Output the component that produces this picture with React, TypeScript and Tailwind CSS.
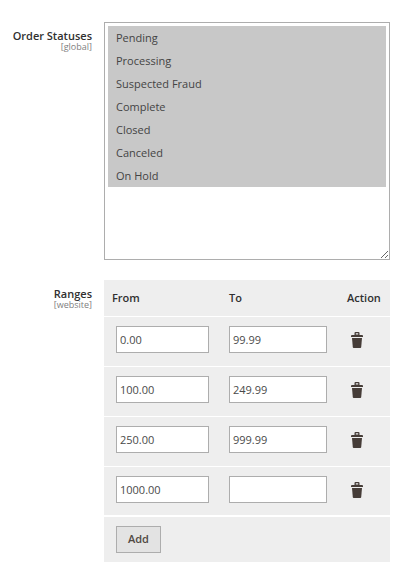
import { useState } from "react";

type Range = {
  id: number;
  from: string;
  to: string;
};

const STATUSES = [
  "Pending",
  "Processing",
  "Suspected Fraud",
  "Complete",
  "Closed",
  "Canceled",
  "On Hold",
];

const INITIAL_RANGES: Range[] = [
  { id: 1, from: "0.00", to: "99.99" },
  { id: 2, from: "100.00", to: "249.99" },
  { id: 3, from: "250.00", to: "999.99" },
  { id: 4, from: "1000.00", to: "" },
];

const inputClass =
  "block h-[27px] w-full border border-[#adadad] bg-white px-[3px] text-[11px] text-[#4a4a4a]";

function TrashIcon() {
  return (
    <svg
      viewBox="0 0 12 16"
      className="block h-4 w-3"
      fill="#463d38"
      aria-hidden="true"
    >
      <path d="M3.500 3V1Q3.500 0 4.500 0H7.500Q8.500 0 8.500 1V3H11Q12 3 12 4V5H0V4Q0 3 1 3ZM4.800 2.600H7.200V1.200H4.800Z" fillRule="evenodd" />
      <path d="M1 6H11L10.200 15.200Q10.100 16 9.300 16H2.700Q1.900 16 1.800 15.200Z" />
    </svg>
  );
}

function FieldLabel({ text, scope, htmlFor, id }: { text: string; scope: string; htmlFor?: string; id?: string }) {
  return (
    <div className="w-[92px] shrink-0 pt-2 text-right">
      <label id={id} htmlFor={htmlFor} className="block text-[11px] leading-[12px] font-semibold">
        {text}
      </label>
      <span className="block text-[9px] leading-[10px] text-[#808080]">{scope}</span>
    </div>
  );
}

export default function App() {
  const [ranges, setRanges] = useState(INITIAL_RANGES);

  const update = (id: number, key: "from" | "to", value: string) =>
    setRanges((rows) => rows.map((r) => (r.id === id ? { ...r, [key]: value } : r)));

  const add = () =>
    setRanges((rows) => [...rows, { id: Date.now(), from: "", to: "" }]);

  return (
    <main className="flex flex-col gap-5 bg-white pt-[22px] pr-[11px] pb-1 font-['Open_Sans',sans-serif] text-[11px] text-[#303030]">
      {/* ORDER STATUSES */}
      <div className="flex gap-3">
        <FieldLabel text="Order Statuses" scope="[global]" htmlFor="statuses" />
        <select
          id="statuses"
          multiple
          defaultValue={STATUSES}
          className="h-[238px] min-w-0 flex-1 resize overflow-auto border border-[#adadad] bg-white p-[3px] text-[11px]"
        >
          {STATUSES.map((s) => (
            <option
              key={s}
              value={s}
              className="h-[23px] px-2 pt-1 pb-0 text-[#444] checked:bg-[#c8c8c8] checked:bg-linear-to-r checked:from-[#c8c8c8] checked:to-[#c8c8c8]"
            >
              {s}
            </option>
          ))}
        </select>
      </div>

      {/* RANGES */}
      <div className="flex gap-3">
        <FieldLabel text="Ranges" scope="[website]" id="ranges-label" />
        <div className="min-w-0 flex-1">
          <table aria-labelledby="ranges-label" className="w-full table-fixed border-collapse bg-[#eee] text-left">
            <colgroup>
              <col className="w-[117px]" />
              <col />
              <col className="w-[51px]" />
            </colgroup>
            <thead>
              <tr className="h-9">
                <th className="px-2 py-0 font-semibold">From</th>
                <th className="px-2 py-0 font-semibold">To</th>
                <th className="pl-2 font-semibold">Action</th>
              </tr>
            </thead>
            <tbody>
              {ranges.map((r) => (
                <tr key={r.id} className="h-[50px] border-t border-white">
                  <td className="pt-[9px] pr-3 pl-3 align-top">
                    <input
                      aria-label="From"
                      value={r.from}
                      onChange={(e) => update(r.id, "from", e.target.value)}
                      className={inputClass}
                    />
                  </td>
                  <td className="pt-[9px] pr-3 pl-2 align-top">
                    <input
                      aria-label="To"
                      value={r.to}
                      onChange={(e) => update(r.id, "to", e.target.value)}
                      className={inputClass}
                    />
                  </td>
                  <td className="pt-[15px] pl-3 align-top">
                    <button
                      type="button"
                      aria-label="Delete"
                      className="block"
                      onClick={() => setRanges((rows) => rows.filter((x) => x.id !== r.id))}
                    >
                      <TrashIcon />
                    </button>
                  </td>
                </tr>
              ))}
            </tbody>
            <tfoot>
              <tr className="border-t-2 border-white">
                <td colSpan={3} className="py-[9px] pl-3">
                  <button
                    type="button"
                    onClick={add}
                    className="block h-[27px] border border-[#adadad] bg-[#e3e3e3] px-[11px] font-semibold text-[#514943]"
                  >
                    Add
                  </button>
                </td>
              </tr>
            </tfoot>
          </table>
        </div>
      </div>
    </main>
  );
}
